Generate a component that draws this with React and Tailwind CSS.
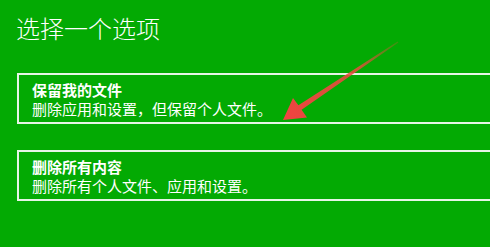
import React from "react";

const font = { fontFamily: '"Noto Sans CJK SC", "Noto Sans", sans-serif' };

function Option({ title, desc, className = "" }) {
  return (
    <div className={`ml-[17px] border-2 border-r-0 border-[#e6f5e6] pl-[13px] pt-[5px] pb-[4px] ${className}`}>
      <div className="text-[15px] leading-[19px] font-bold text-white">{title}</div>
      <div className="text-[15px] leading-[19px] text-white">{desc}</div>
    </div>
  );
}

export default function App() {
  return (
    <div className="relative w-[490px] h-[247px] overflow-hidden bg-[#03aa03]" style={font}>
      <div className="pt-[12px]">
        <div className="pl-[16px] text-[24px] leading-[32px] text-white font-light">选择一个选项</div>
        <Option className="mt-[29px]" title="保留我的文件" desc="删除应用和设置，但保留个人文件。" />
        <Option className="mt-[26px]" title="删除所有内容" desc="删除所有个人文件、应用和设置。" />
      </div>
      <svg className="absolute left-0 top-0" width="490" height="247" viewBox="0 0 490 247">
        <defs>
          <linearGradient id="ag" x1="398" y1="42" x2="283" y2="120" gradientUnits="userSpaceOnUse">
            <stop offset="0" stopColor="#e0503a" stopOpacity="0.25" />
            <stop offset="0.35" stopColor="#ee4a3e" stopOpacity="0.85" />
            <stop offset="1" stopColor="#f34242" stopOpacity="1" />
          </linearGradient>
        </defs>
        <polygon
          points="398.4,42.6 301.6,109.8 307,117.5 283,120 293,98 298.4,105.2 397.6,41.4"
          fill="url(#ag)"
        />
      </svg>
    </div>
  );
}
